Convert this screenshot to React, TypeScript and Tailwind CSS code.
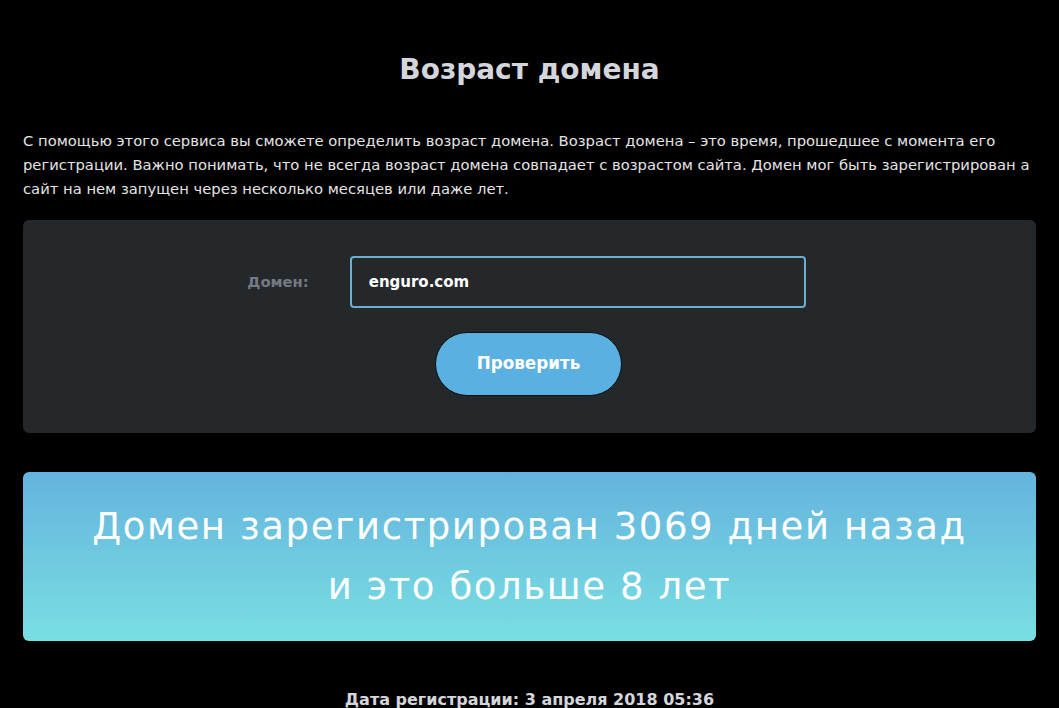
export default function App() {
  const font = { fontFamily: '"DejaVu Sans", "Noto Sans", sans-serif' };
  return (
    <div className="min-h-[708px] bg-black text-[#e2e2e2]" style={font}>
      <div className="mx-[23px] w-[1013px] pt-[52px]">
        <h1 className="text-center text-[28px] font-bold leading-[36px] text-[#d4d6db]">
          Возраст домена
        </h1>

        <p className="mt-[41px] whitespace-nowrap text-[14.75px] leading-[24px] text-[#e4e4e4]">
          С помощью этого сервиса вы сможете определить возраст домена. Возраст домена – это время, прошедшее с момента его
          <br />
          регистрации. Важно понимать, что не всегда возраст домена совпадает с возрастом сайта. Домен мог быть зарегистрирован а
          <br />
          сайт на нем запущен через несколько месяцев или даже лет.
        </p>

        <div className="mt-[19px] flex h-[213px] flex-col items-center rounded-[6px] bg-[#25282b] pt-[36px]">
          <div className="ml-[-6px] flex items-center">
            <label className="mr-[41px] text-[14.75px] font-bold text-[#737a84]">Домен:</label>
            <div className="flex h-[52px] w-[456px] items-center rounded-[4px] border-2 border-[#6aaed0] bg-[#25282b] pl-[17px] text-[15px] font-bold text-white">
              enguro.com
            </div>
          </div>
          <button className="mt-[24px] ml-[-2px] flex h-[64px] w-[187px] items-center justify-center rounded-full border border-[#0d0f12] bg-[#5ab0e0] text-[16.75px] font-bold text-white">
            Проверить
          </button>
        </div>

        <div className="mt-[39px] flex h-[169px] flex-col items-center justify-center rounded-[6px] bg-gradient-to-b from-[#65b3dd] to-[#79dfe2] text-center text-[37px] font-normal leading-[60px] tracking-[1.6px] text-white">
          <div>Домен зарегистрирован 3069 дней назад</div>
          <div>и это больше 8 лет</div>
        </div>

        <div className="mt-[47px] text-center text-[16px] font-bold leading-[24px] text-[#d4d6db]">
          Дата регистрации: 3 апреля 2018 05:36
        </div>
      </div>
    </div>
  );
}
